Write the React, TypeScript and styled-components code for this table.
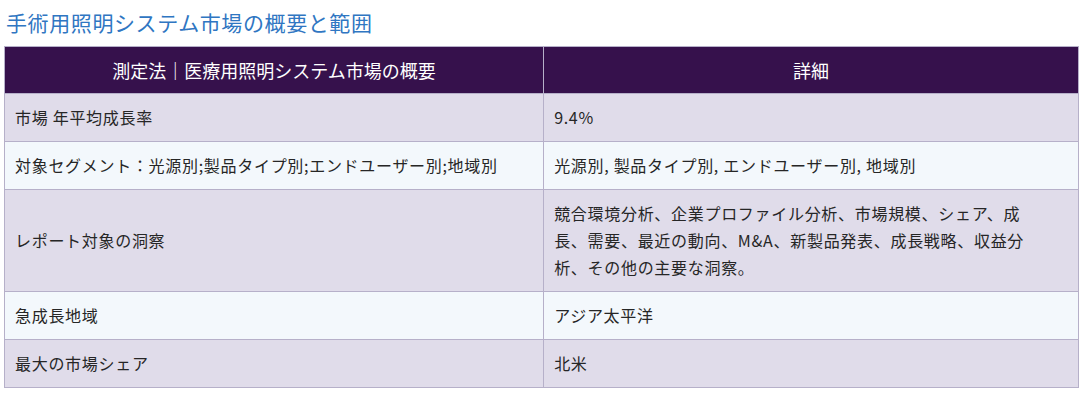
import React from "react";
import styled, { createGlobalStyle } from "styled-components";

const Global = createGlobalStyle`
  html, body { margin: 0; padding: 0; background: #ffffff; }
  body { font-family: "Noto Sans CJK JP", "Noto Sans", sans-serif; }
`;

const Page = styled.div`
  padding: 6px 9px 0 4px;
`;

const Title = styled.h2`
  margin: 0 0 8px 2px;
  font-size: 21px;
  letter-spacing: 0.6px;
  line-height: 32px;
  font-weight: 400;
  color: #2f76c2;
`;

const Table = styled.table`
  width: 1075px;
  border-collapse: collapse;
  table-layout: fixed;
  border: 1px solid #b6b0c9;
`;

const HeadCell = styled.th`
  background: #36114c;
  color: #ffffff;
  font-weight: 400;
  font-size: 18px;
  line-height: 26px;
  padding: 10px;
  text-align: center;
  border: 1px solid #b6b0c9;
`;

const Row = styled.tr<{ $alt: boolean }>`
  background: ${(p) => (p.$alt ? "#f3f8fc" : "#e0dcea")};
`;

const Cell = styled.td<{ $detail?: boolean }>`
  font-size: 16px;
  letter-spacing: 0.7px;
  line-height: 27px;
  padding: 10px ${(p) => (p.$detail ? "30px" : "10px")} 10px 10px;
  color: #262626;
  border: 1px solid #b6b0c9;
  vertical-align: middle;
`;

const rows: [string, string][] = [
  ["市場 年平均成長率", "9.4%"],
  [
    "対象セグメント：光源別;製品タイプ別;エンドユーザー別;地域別",
    "光源別, 製品タイプ別, エンドユーザー別, 地域別",
  ],
  [
    "レポート対象の洞察",
    "競合環境分析、企業プロファイル分析、市場規模、シェア、成長、需要、最近の動向、M&A、新製品発表、成長戦略、収益分析、その他の主要な洞察。",
  ],
  ["急成長地域", "アジア太平洋"],
  ["最大の市場シェア", "北米"],
];

export default function App() {
  return (
    <Page>
      <Global />
      <Title>手術用照明システム市場の概要と範囲</Title>
      <Table>
        <colgroup>
          <col style={{ width: "50.2%" }} />
          <col style={{ width: "49.8%" }} />
        </colgroup>
        <thead>
          <tr>
            <HeadCell>測定法｜医療用照明システム市場の概要</HeadCell>
            <HeadCell>詳細</HeadCell>
          </tr>
        </thead>
        <tbody>
          {rows.map(([a, b], i) => (
            <Row key={i} $alt={i % 2 === 1}>
              <Cell>{a}</Cell>
              <Cell $detail>{b}</Cell>
            </Row>
          ))}
        </tbody>
      </Table>
    </Page>
  );
}
